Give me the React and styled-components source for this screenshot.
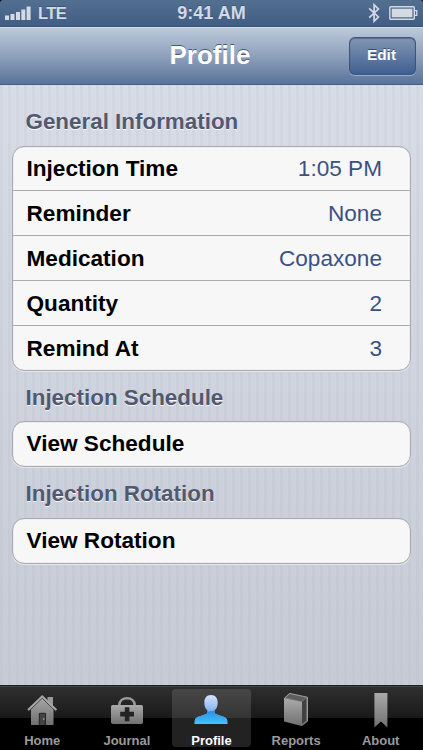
import styled, { createGlobalStyle } from "styled-components";

const GlobalStyle = createGlobalStyle`
  * {
    box-sizing: border-box;
  }
  body {
    margin: 0;
    background: #000;
    font-family: "Liberation Sans", Arial, sans-serif;
  }
`;

const Screen = styled.div`
  display: flex;
  flex-direction: column;
  width: 423px;
  height: 750px;
  overflow: hidden;
`;

const StatusBar = styled.header`
  display: grid;
  grid-template-columns: 1fr auto 1fr;
  align-items: center;
  height: 26px;
  padding: 0 5px;
  background: linear-gradient(#536f90, #415d84);
  border-radius: 3px 3px 0 0;
  color: #d3dae4;
  font-size: 18px;
  font-weight: bold;
  line-height: 26px;
  text-shadow: 0 -1px 0 rgba(30, 50, 80, 0.4);
`;

const Carrier = styled.div`
  display: flex;
  align-items: center;
  gap: 7px;
  font-size: 16.6px;
  letter-spacing: -0.7px;
`;

const Network = styled.span`
  padding-top: 2px;
  line-height: 24px;
`;

const StatusIcons = styled.div`
  display: flex;
  align-items: center;
  justify-content: flex-end;
  gap: 9px;
`;

const NavBar = styled.nav`
  display: grid;
  grid-template-columns: 1fr auto 1fr;
  align-items: center;
  height: 59px;
  padding: 0 7px;
  border-top: 1px solid #3b5579;
  border-bottom: 1px solid #415c85;
  background: linear-gradient(#bdcadb, #8fa2bd 50%, #597499);
  box-shadow: inset 0 1px 0 #d1dae7;
`;

const Title = styled.h1`
  grid-column: 2;
  margin: 0;
  padding: 0 3px 2px 0;
  color: #fff;
  font-size: 26px;
  line-height: 30px;
  text-shadow: 0 -1px 0 rgba(45, 60, 85, 0.75);
`;

const EditButton = styled.button`
  justify-self: end;
  width: 67px;
  height: 38px;
  padding: 0 2px 2px 0;
  border: 1px solid #405477;
  border-bottom-color: #3b5785;
  border-radius: 6px;
  background: linear-gradient(#8396b3, #607ba3 50%, #3f5f91);
  box-shadow: inset 0 1px 1px rgba(45, 60, 90, 0.45), 0 1px 0 rgba(200, 215, 235, 0.5);
  color: #fff;
  font-family: inherit;
  font-size: 15.4px;
  font-weight: bold;
  text-shadow: 0 -1px 0 rgba(35, 50, 80, 0.7);
`;

const Content = styled.main`
  flex: 1;
  padding: 10px 12px 0;
  background:
    repeating-linear-gradient(90deg, rgba(120, 135, 160, 0.06) 0 3px, transparent 3px 8px),
    linear-gradient(#d8dce6, #c7cbd6);
`;

const SectionTitle = styled.h2`
  display: flex;
  align-items: center;
  height: ${({ $first }) => ($first ? "51px" : "50.4px")};
  margin: 0;
  padding: 3px 13px 0 13.5px;
  color: #505970;
  font-size: 22.4px;
  line-height: 26px;
  text-shadow: 0 1px 0 rgba(255, 255, 255, 0.85);
`;

const Group = styled.ul`
  margin: 0;
  padding: 0;
  overflow: hidden;
  border: 1px solid #a7a9af;
  border-radius: 12px;
  background: #f7f7f7;
  box-shadow: 0 1px 0 #e4e7ec, inset 0 0 1px #a7a9af;
  list-style: none;
`;

const Row = styled.li`
  display: flex;
  align-items: center;
  justify-content: space-between;
  height: 43px;
  padding: 0 28px 0 13.5px;
  font-size: 22.6px;

  & + & {
    height: 45px;
    padding-top: 2px;
    border-top: 1px solid #abacae;
  }
  &:only-child {
    height: 44px;
  }
`;

const Label = styled.span`
  color: #000;
  font-weight: bold;
`;

const Value = styled.span`
  color: #395284;
`;

const TabBar = styled.footer`
  display: grid;
  grid-template-columns: repeat(5, 1fr);
  height: 65px;
  padding: 3px 0 2px;
  border-top: 1px solid #202124;
  background: linear-gradient(#303030, #191919 32px, #000 32px);
  box-shadow: inset 0 1px 0 #424244;
`;

const Tab = styled.div`
  display: flex;
  flex-direction: column;
  align-items: center;
  justify-content: space-between;
  width: 79px;
  height: 58px;
  justify-self: center;
  border-radius: 4px;
  background: ${({ $active }) =>
    $active ? "linear-gradient(#474747, #343434 29px, #222 29px)" : "none"};
  color: ${({ $active }) => ($active ? "#fff" : "#9b9b9b")};
  font-size: 13px;
  font-weight: bold;
  line-height: 13px;

  svg {
    display: block;
    margin-top: -5px;
  }
`;

function SignalIcon() {
  return (
    <svg width="26" height="14" viewBox="0 0 26 14" fill="#d3dae4">
      <path d="M0 9.5h4V14H0zM5.5 8h4v6h-4zM11 6h4v8h-4zM16.3 3.5h4V14h-4zM21.6.5h4V14h-4z" />
    </svg>
  );
}

function BluetoothIcon() {
  return (
    <svg width="12" height="20" viewBox="0 0 12 20" fill="none" stroke="#d3dae4" strokeWidth="1.7">
      <path d="M1.2 5.3 10.4 14l-4.3 4.2V1.8L10.4 6l-9.2 8.7" />
    </svg>
  );
}

function BatteryIcon() {
  return (
    <svg width="29" height="14" viewBox="0 0 29 14">
      <rect x=".8" y=".8" width="24.5" height="12.4" rx="1" fill="none" stroke="#d3dae4" strokeWidth="1.4" />
      <rect x="2.7" y="2.7" width="20.7" height="8.6" fill="#d3dae4" />
      <path d="M25.5 4.7h2.3v4.6h-2.3" fill="none" stroke="#d3dae4" strokeWidth="1.3" />
    </svg>
  );
}

function IconGradient({ id }) {
  return (
    <defs>
      <linearGradient id={id} x2="0" y2="1">
        <stop stopColor="#aaa" />
        <stop offset="1" stopColor="#707070" />
      </linearGradient>
    </defs>
  );
}

function HomeIcon() {
  return (
    <svg width="40" height="42" viewBox="0 0 40 42">
      <IconGradient id="home" />
      <path fill="url(#home)" d="M9 23v18h22.5V23L20 12z" />
      <path d="M25.5 13h5.5v10l-5.5-5z" fill="#999" />
      <path d="m6.5 27.5 13.7-13.3 13.7 13.3" fill="none" stroke="#3a3a3a" strokeWidth="1" />
      <path d="m6 26 14.2-13.8L34.4 26" fill="none" stroke="#a7a7a7" strokeWidth="1.9" />
      <path d="M17.3 41V29.3h6.2V41" fill="#444" stroke="#252525" strokeWidth="1" />
      <path d="M21.8 34v2" stroke="#aaa" />
    </svg>
  );
}

function JournalIcon() {
  return (
    <svg width="40" height="42" viewBox="0 0 40 42">
      <IconGradient id="journal" />
      <path d="M12.3 21c.3-4.2 3.5-6.7 7.7-6.7s7.4 2.5 7.7 6.7" fill="none" stroke="#999" strokeWidth="2.6" />
      <rect x="4" y="21" width="32" height="19" rx="1.8" fill="url(#journal)" />
      <path d="M17.8 23.2h4.6v4.5H27v4.7h-4.6v4.9h-4.6v-4.9h-4.6v-4.7h4.6z" fill="#242424" />
    </svg>
  );
}

function ProfileIcon() {
  return (
    <svg width="40" height="42" viewBox="0 0 40 42">
      <defs>
        <linearGradient id="profile" gradientUnits="userSpaceOnUse" x1="20" y1="11" x2="20" y2="40">
          <stop stopColor="#d5e3fb" />
          <stop offset=".53" stopColor="#88b6f1" />
        </linearGradient>
        <linearGradient id="glow" gradientUnits="userSpaceOnUse" x1="20" y1="26" x2="20" y2="40">
          <stop stopColor="#258cdf" />
          <stop offset="1" stopColor="#45c3ff" />
        </linearGradient>
        <clipPath id="bust">
          <path d="M20 11c-4.6 0-6.7 3.3-6.7 7.5 0 3.6 1 6.2 2.8 7.6.6.5.7 3.2-.7 3.9C12.2 31.5 4.4 32.5 3.9 36c-.2 1.2-.3 2.8-.2 4h32.6c.1-1.2 0-2.8-.2-4-.5-3.5-8.3-4.5-11.5-6-1.4-.7-1.3-3.4-.7-3.9 1.8-1.4 2.8-4 2.8-7.6 0-4.2-2.1-7.5-6.7-7.5z" />
        </clipPath>
      </defs>
      <g clipPath="url(#bust)">
        <path d="M0 10h40v31H0z" fill="url(#profile)" />
        <path d="M0 34C10 28 20 26 40 25v16H0z" fill="url(#glow)" />
      </g>
    </svg>
  );
}

function ReportsIcon() {
  return (
    <svg width="40" height="42" viewBox="0 0 40 42">
      <IconGradient id="reports" />
      <path d="m8 14.3 5.3-4.8 18.4 3.9v24.4L26 42z" fill="#777" />
      <path d="m9.7 13.6 4-3.6L30 13.6l-4.2 3.7z" fill="#5e5e5e" />
      <path d="M26 18v22l4.4-3.2V14z" fill="#414141" />
      <path d="m8 14.3 18 3.8v24L8 37.4z" fill="url(#reports)" />
      <path d="m8.4 14.3 5.2-4.9 17.8 3.8V37" fill="none" stroke="#aaa" strokeWidth=".9" />
    </svg>
  );
}

function AboutIcon() {
  return (
    <svg width="40" height="44" viewBox="0 0 40 44">
      <IconGradient id="about" />
      <path d="M13.4 9h13v34.5l-6.5-6-6.5 6z" fill="url(#about)" />
    </svg>
  );
}

const sections = [
  {
    title: "General Information",
    rows: [
      ["Injection Time", "1:05 PM"],
      ["Reminder", "None"],
      ["Medication", "Copaxone"],
      ["Quantity", "2"],
      ["Remind At", "3"],
    ],
  },
  { title: "Injection Schedule", rows: [["View Schedule"]] },
  { title: "Injection Rotation", rows: [["View Rotation"]] },
];

const tabs = [
  { name: "Home", Icon: HomeIcon },
  { name: "Journal", Icon: JournalIcon },
  { name: "Profile", Icon: ProfileIcon },
  { name: "Reports", Icon: ReportsIcon },
  { name: "About", Icon: AboutIcon },
];

export default function App() {
  return (
    <>
      <GlobalStyle />
      <Screen>
        <StatusBar>
          <Carrier>
            <SignalIcon />
            <Network>LTE</Network>
          </Carrier>
          <span>9:41 AM</span>
          <StatusIcons>
            <BluetoothIcon />
            <BatteryIcon />
          </StatusIcons>
        </StatusBar>
        <NavBar>
          <Title>Profile</Title>
          <EditButton>Edit</EditButton>
        </NavBar>
        <Content>
          {sections.map(({ title, rows }, index) => (
            <section key={title}>
              <SectionTitle $first={index === 0}>{title}</SectionTitle>
              <Group>
                {rows.map(([label, value]) => (
                  <Row key={label}>
                    <Label>{label}</Label>
                    {value && <Value>{value}</Value>}
                  </Row>
                ))}
              </Group>
            </section>
          ))}
        </Content>
        <TabBar>
          {tabs.map(({ name, Icon }) => (
            <Tab key={name} $active={name === "Profile"}>
              <Icon />
              {name}
            </Tab>
          ))}
        </TabBar>
      </Screen>
    </>
  );
}
